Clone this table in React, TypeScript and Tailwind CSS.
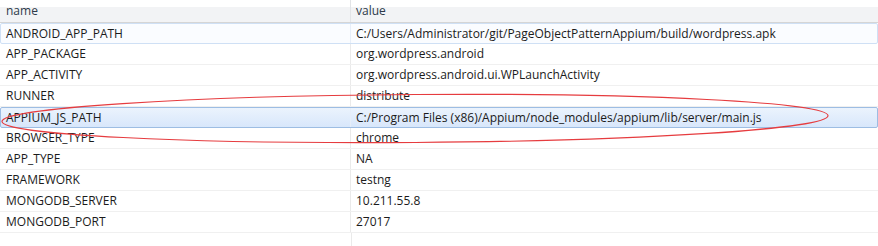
import React from 'react';

type Prop = { name: string; value: string };

const PROPS: Prop[] = [
  { name: 'ANDROID_APP_PATH', value: 'C:/Users/Administrator/git/PageObjectPatternAppium/build/wordpress.apk' },
  { name: 'APP_PACKAGE', value: 'org.wordpress.android' },
  { name: 'APP_ACTIVITY', value: 'org.wordpress.android.ui.WPLaunchActivity' },
  { name: 'RUNNER', value: 'distribute' },
  { name: 'APPIUM_JS_PATH', value: 'C:/Program Files (x86)/Appium/node_modules/appium/lib/server/main.js' },
  { name: 'BROWSER_TYPE', value: 'chrome' },
  { name: 'APP_TYPE', value: 'NA' },
  { name: 'FRAMEWORK', value: 'testng' },
  { name: 'MONGODB_SERVER', value: '10.211.55.8' },
  { name: 'MONGODB_PORT', value: '27017' },
];

// row 0 has the focus outline, row 4 is the selected one
function rowStyle(i: number) {
  if (i === 0) return 'border border-[#cfe0f5] rounded-[2px] bg-[#fafcff]';
  if (i === 4)
    return 'border border-[#9dbde3] rounded-[2px] bg-[linear-gradient(to_bottom,#ebf3fd,#d8e7fb)]';
  return 'border-b border-[#f0f0f0]';
}

function PropRow({ prop, index }: { prop: Prop; index: number }) {
  const special = index === 0 || index === 4;
  return (
    <div className={`flex h-[21px] items-center box-border ${rowStyle(index)}`}>
      <div
        className={`flex h-full shrink-0 items-center border-r ${
          special ? 'pl-[5px] w-[350px] border-[#e6eef9]' : 'pl-[6px] w-[351px] border-[#eaeaea]'
        }`}
      >
        {prop.name}
      </div>
      <div className="pl-[5px] whitespace-nowrap">{prop.value}</div>
    </div>
  );
}

export default function App() {
  return (
    <div
      className="relative w-[878px] h-[246px] overflow-hidden bg-white text-[12px] text-[#1b1b1b]"
      style={{ fontFamily: '"Open Sans", "Liberation Sans", Arial, sans-serif' }}
    >
      <div className="flex h-[23px] items-center border-b border-[#d5d5d5] bg-[linear-gradient(to_bottom,#ffffff_0%,#ffffff_33%,#f2f3f5_34%,#f2f3f5_100%)] text-[#2d3a4a]">
        <div className="flex h-full w-[351px] items-center border-r border-[#e2e4e7] pl-[6px]">name</div>
        <div className="pl-[5px]">value</div>
      </div>

      <div className="flex flex-col">
        {PROPS.map((p, i) => (
          <PropRow key={p.name} prop={p} index={i} />
        ))}
      </div>
      <div className="ml-[351px] h-[20px] w-px bg-[#eaeaea]" />

      {/* hand-drawn annotation */}
      <svg className="pointer-events-none absolute left-0 top-0" width="878" height="246">
        <ellipse
          cx="415"
          cy="118.5"
          rx="413"
          ry="24"
          fill="none"
          stroke="#e63c3f"
          strokeWidth="1.2"
          transform="rotate(-0.4 415 118.5)"
        />
      </svg>
    </div>
  );
}
